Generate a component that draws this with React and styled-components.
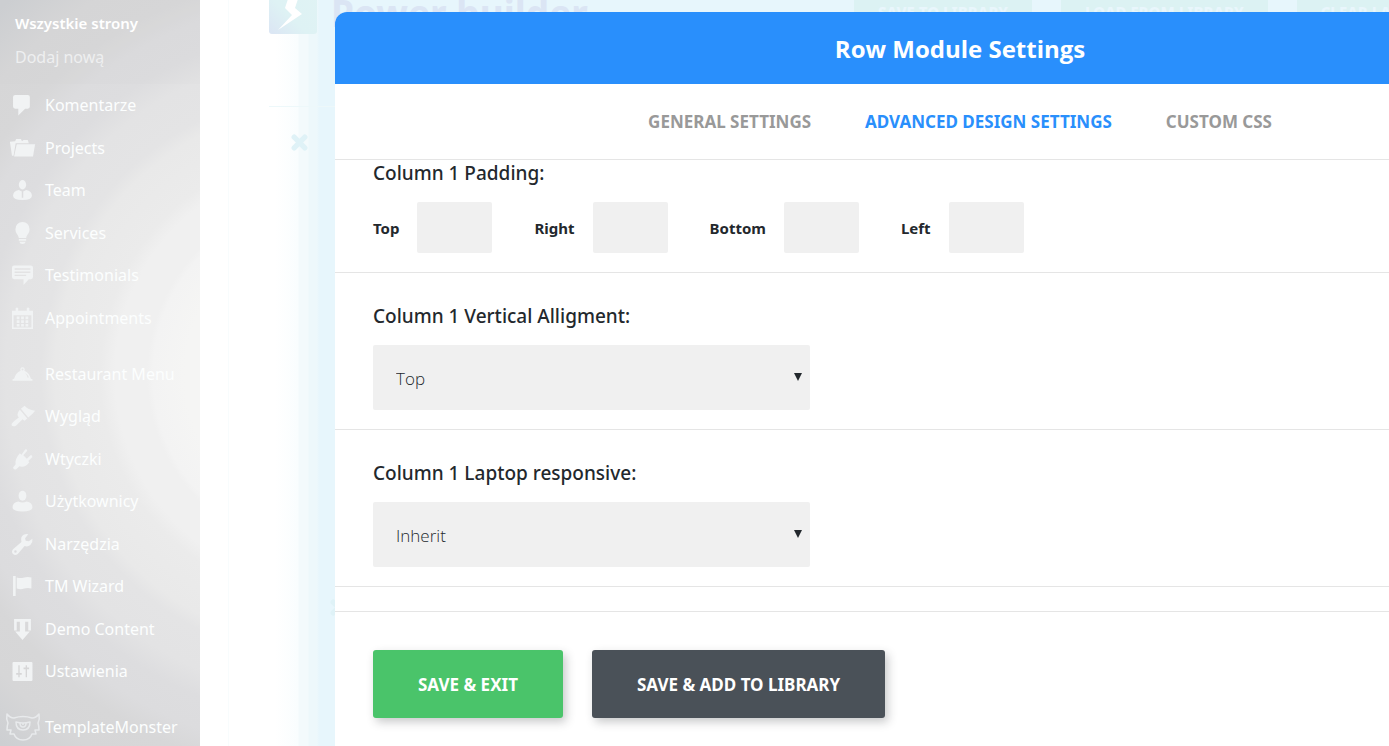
import { useState } from 'react';
import styled, { createGlobalStyle } from 'styled-components';

const menu = [
    { name: 'Komentarze', icon: 'comments' },
    { name: 'Projects', icon: 'folder' },
    { name: 'Team', icon: 'team' },
    { name: 'Services', icon: 'bulb' },
    { name: 'Testimonials', icon: 'quote' },
    { name: 'Appointments', icon: 'calendar' },
    null,
    { name: 'Restaurant Menu', icon: 'dish' },
    { name: 'Wygląd', icon: 'brush' },
    { name: 'Wtyczki', icon: 'plug' },
    { name: 'Użytkownicy', icon: 'user' },
    { name: 'Narzędzia', icon: 'wrench' },
    { name: 'TM Wizard', icon: 'flag' },
    { name: 'Demo Content', icon: 'download' },
    { name: 'Ustawienia', icon: 'sliders' },
    null,
    { name: 'TemplateMonster', icon: 'monster' },
]

// 20x20 glyphs
const icons = {
    comments: <path d="M3 0h12q2 0 2 2v9q0 2-2 2h-2.500L6 19.500V13H3q-2 0-2-2V2q0-2 2-2z" />,
    folder: (
        <>
            <path d="M-2 3.500 3 3l1-2h4.500l1 2 1.500-1h4l1 3H3.500L1.500 17H0z" />
            <path d="M4.500 6H22L20 17.500H2z" />
        </>
    ),
    team: (
        <>
            <ellipse cx="10" cy="4.500" rx="3.500" ry="4.500" />
            <path d="M6.500 9.500 9.300 11v6h1.400v-6l2.800-1.500q5.500 1 5.500 5.500 0 4-9 4t-9-4q0-4.500 5.500-5.500z" />
        </>
    ),
    bulb: (
        <>
            <path d="M10-1a6.700 6.700 0 0 1 6.700 7c0 4-2.700 5-3.200 8.300h-7C6 11 3.300 10 3.300 6A6.700 6.700 0 0 1 10-1z" />
            <path d="M6.500 15.300h7v1.500h-7zM7 17.800h6q-.5 2.200-3 2.200t-3-2.200z" />
        </>
    ),
    quote: (
        <path fillRule="evenodd" d="M2 .5h16q2 0 2 2v9q0 2-2 2h-2L11 19v-5.500H2q-2 0-2-2v-9q0-2 2-2zM2.500 3.200v1.300h15V3.200zM2.500 6.200v1.300h15V6.200zM2.500 9.200v1.300h11V9.200z" />
    ),
    calendar: (
        <path fillRule="evenodd" d="M0 2.500h3.500V0q1.200-1 2.400 0v2.500h8.200V0q1.200-1 2.400 0v2.500H20V20H0zM1.500 7v11.500h17V7zM4.500 8.200h2.600v2.500H4.500zm4.200 0h2.600v2.500H8.700zm4.200 0h2.600v2.500h-2.600zM4.500 11.700h2.600v2.500H4.500zm4.200 0h2.600v2.500H8.700zm4.200 0h2.600v2.500h-2.600zM4.500 15.200h2.600v2.300H4.500zm4.200 0h2.600v2.300H8.700zm4.200 0h2.600v2.300h-2.600z" />
    ),
    dish: <path fillRule="evenodd" d="M10 3a2.200 2.200 0 0 1 1.800 3.400Q16.500 8.500 18 14l1.500.5V16H.5v-1.500L2 14Q3.500 8.500 8.200 6.400A2.200 2.200 0 0 1 10 3zm0 1.200a.9.900 0 1 0 .1 0zm2.500 4.300q1.800 1.500 2.500 4.500l1-.3Q15 9.500 12.500 8.500z" />,
    brush: (
        <>
            <path d="M8.500 2.500 12-.2Q15 3.500 22 4.500q-2.500 3.500-6.500 6.500z" />
            <path d="M7.500 3.500 14.500 12l-2.500 2-2-1.500-6 6Q1 20.500-.5 18-.7 16 6.500 11L5.500 9.500Q4.500 7 7.500 3.500z" />
        </>
    ),
    plug: (
        <path d="M12.500.5q1.800-.6 2 1.200L10.800 6l3.300 3.200L18 5.700q1.800.3 1.200 2.200L15.500 11.500l1 1Q12.500 18 7 16.500l-3 2.700q-2.500 1-3-1.500L3.500 14.500Q2.500 9.500 7.500 4L9 5.500z" />
    ),
    user: (
        <>
            <ellipse cx="10" cy="4.500" rx="3.700" ry="4.700" />
            <path d="M6 10q4 2 8 0 5.500 1 5.500 5.500 0 4-9.500 4t-9.500-4Q.5 11 6 10z" />
        </>
    ),
    wrench: (
        <path fillRule="evenodd" d="M19.500 4.500 16 7l-3-.5L12.500 4 15.500.2Q11-.5 9 3q-.8 2 0 4.500L1 14.500q-2 2.500 0 4.500t4.500 0L12 11.500q3 1 5.500-1 2.500-2.500 2-6zM3.300 15.500a1.200 1.200 0 1 1 0 2.400 1.200 1.200 0 0 1 0-2.400z" />
    ),
    flag: <path d="M1 0h2.500v19H1zM4.500 1.500q4 1 7 0 3.500-1 7 0V12q-3.500-1-7 0-3 1-7 0z" />,
    download: <path d="M2 0h16v11h-2.500V2.500h-3V12H17l-7 8-7-8h4.500V2.500h-3V11H2z" />,
    sliders: (
        <path fillRule="evenodd" d="M1.500 1h17q1 0 1 1v16q0 1-1 1h-17q-1 0-1-1V2q0-1 1-1zM6 4v7.500H4V13h2v2.500h1.300V13h2v-1.500h-2V4zm7 0v2.300h-2v1.500h2v7.700h1.300V7.800h2V6.300h-2V4z" />
    ),
}

const Icon = ({ name }) => {
    if (name === 'monster') {
        return (
            <MonsterSvg viewBox="0 0 34 28" aria-hidden="true">
                <path d="M1 1q3 4 7 4 9-3 18 0 4 0 7-4 1 5-1 9 1 3 1 7h-4l1 4h-4q-2 6-9 6t-9-6H4l1-4H1q0-4 1-7Q0 6 1 1z" />
                <path d="M10 9q7 2 14 0 0 8-7 8t-7-8z" />
                <path d="M14 10q0 4 3 4t3-4M17 10v2" />
            </MonsterSvg>
        )
    }
    return (
        <MenuSvg viewBox="0 0 20 20" aria-hidden="true">{icons[name]}</MenuSvg>
    )
}

const tabs = ['General settings', 'Advanced design settings', 'Custom CSS']

const sides = ['Top', 'Right', 'Bottom', 'Left']

function SelectField({ id, label, options }) {
    return (
        <Section>
            <FieldTitle as="label" htmlFor={id}>{label}</FieldTitle>
            <SelectBox>
                <Select id={id}>
                    {options.map(option => <option key={option}>{option}</option>)}
                </Select>
                <Arrow viewBox="0 0 8 8" aria-hidden="true">
                    <path d="M0 0h8L4 8z" />
                </Arrow>
            </SelectBox>
        </Section>
    )
}

function App() {
    const [active, setActive] = useState(tabs[1])

    return (
        <>
            <GlobalStyle />
            <Page>
                <Sidebar>
                    <Submenu>
                        <SubLink href="#" $current>Wszystkie strony</SubLink>
                        <SubLink href="#">Dodaj nową</SubLink>
                    </Submenu>
                    <Menu>
                        {menu.map((item, i) => item ? (
                            <li key={item.name}>
                                <MenuLink href="#">
                                    <IconSlot><Icon name={item.icon} /></IconSlot>
                                    {item.name}
                                </MenuLink>
                            </li>
                        ) : <Separator key={i} />)}
                    </Menu>
                </Sidebar>

                <Builder>
                    <BuilderPanel>
                        <BuilderHead>
                            <Logo viewBox="0 0 48 48" aria-hidden="true">
                                <defs>
                                    <linearGradient id="logo" x1="0" y1="1" x2="1" y2="0">
                                        <stop offset="0" stopColor="#dbe5f4" />
                                        <stop offset="0.4" stopColor="#def2f4" />
                                        <stop offset="1" stopColor="#e0f3f4" />
                                    </linearGradient>
                                </defs>
                                <rect width="48" height="48" rx="3" fill="url(#logo)" />
                                <path d="M22 4 16 22l7 7-14 15 24-16-7-6 6-18z" fill="#fff" />
                            </Logo>
                            <BuilderTitle>Power builder</BuilderTitle>
                            <BuilderActions>
                                <GhostButton type="button">Save to library</GhostButton>
                                <GhostButton type="button">Load from library</GhostButton>
                                <GhostButton type="button">Clear layout</GhostButton>
                            </BuilderActions>
                        </BuilderHead>
                        <BuilderRow>
                            <Cross viewBox="0 0 16 16" aria-hidden="true">
                                <path d="M3 3l10 10M13 3 3 13" />
                            </Cross>
                            <Cross viewBox="0 0 16 16" aria-hidden="true" $inner>
                                <path d="M3 3l10 10M13 3 3 13" />
                            </Cross>
                        </BuilderRow>
                    </BuilderPanel>
                </Builder>

                <Modal role="dialog" aria-labelledby="modal-title">
                    <ModalHeader>
                        <ModalTitle id="modal-title">Row Module Settings</ModalTitle>
                    </ModalHeader>
                    <Tabs>
                        {tabs.map(tab => (
                            <Tab key={tab} type="button" $active={tab === active} onClick={() => setActive(tab)}>
                                {tab}
                            </Tab>
                        ))}
                    </Tabs>
                    <ModalBody>
                        <Section $scrolled>
                            <FieldTitle>Column 1 Padding:</FieldTitle>
                            <Sides>
                                {sides.map(side => (
                                    <SideLabel key={side}>
                                        {side}
                                        <SideInput type="text" />
                                    </SideLabel>
                                ))}
                            </Sides>
                        </Section>
                        <SelectField id="valign" label="Column 1 Vertical Alligment:" options={['Top', 'Center', 'Bottom']} />
                        <SelectField id="laptop" label="Column 1 Laptop responsive:" options={['Inherit', '1/2', '1/3']} />
                    </ModalBody>
                    <ModalFooter>
                        <Button type="button" $color="#4ac46a">Save &amp; Exit</Button>
                        <Button type="button" $color="#4a5158">Save &amp; Add to library</Button>
                    </ModalFooter>
                </Modal>
            </Page>
        </>
    )
}

export default App

const GlobalStyle = createGlobalStyle`
    * {
        box-sizing: border-box;
    }

    body {
        margin: 0;
        font-family: "Noto Sans", "Open Sans", sans-serif;
        color: #23282d;
        background: #fff;
    }

    button, input, select {
        font-family: inherit;
    }
`

const Page = styled.div`
    position: relative;
    display: flex;
    height: 100vh;
    overflow: hidden;
`

const Sidebar = styled.nav`
    flex: 0 0 200px;
    background: radial-gradient(circle at 325px 375px, #f5f5f4 140px, #f3f3f3 172px, #f0f0f0 178px, #f0f0f0 210px, #ebebeb 225px, #e9e9e9 270px, #e4e4e5 284px, #e3e3e4 320px, #dddddf 345px, #dcdcde 375px, #d7d7d8 400px, #d6d6d7 440px, #cdcfd2 490px);
`

const Submenu = styled.div`
    display: flex;
    flex-direction: column;
    padding: 6px 15px 10px;
    background: rgba(200, 200, 200, 0.08);
`

const SubLink = styled.a`
    font-size: ${({ $current }) => $current ? '15px' : '16px'};
    line-height: 34px;
    font-weight: ${({ $current }) => $current ? 600 : 400};
    color: ${({ $current }) => $current ? '#fff' : '#eeeff0'};
    text-decoration: none;
`

const Menu = styled.ul`
    list-style: none;
    margin: 0;
    padding: 0;

    li:nth-child(even) {
        margin-top: 1px;
    }
`

const Separator = styled.li`
    height: 13px;
`

const MenuLink = styled.a`
    display: flex;
    align-items: center;
    height: 42px;
    font-size: 16px;
    white-space: nowrap;
    color: #fcfefe;
    text-decoration: none;
`

const IconSlot = styled.span`
    flex: 0 0 45px;
    display: flex;
    justify-content: center;
`

const MenuSvg = styled.svg`
    width: 21px;
    height: 21px;
    fill: #f1f3f4;
    overflow: visible;
`

const MonsterSvg = styled.svg`
    width: 34px;
    height: 28px;
    fill: none;
    stroke: #e8eaec;
    stroke-width: 1.5;
    stroke-linejoin: round;
    overflow: visible;
`

const Builder = styled.main`
    flex: 1;
    min-width: 0;
    padding-left: 28px;
    background: linear-gradient(to right, #fff 75px, #f9fdfe 98px, #f3fafc 99px, #f3fafc 108px, #edf8fb 109px, #edf8fb 117px, #e7f6fc 119px);
`

const BuilderPanel = styled.div`
    display: flex;
    flex-direction: column;
    height: 100%;
    padding-left: 40px;
    border-left: 1px solid #f8fcfd;
`

const BuilderHead = styled.header`
    display: flex;
    gap: 14px;
    height: 106px;
`

const Logo = styled.svg`
    flex: none;
    width: 48px;
    height: 48px;
    margin-top: -14px;
`

const BuilderTitle = styled.h1`
    flex: none;
    width: 494px;
    margin: -14px 0 0;
    font-size: 37px;
    line-height: 54px;
    font-weight: 700;
    white-space: nowrap;
    color: #dbe5f4;
`

const BuilderActions = styled.div`
    display: flex;
    align-items: flex-start;
    gap: 29px;
    margin-left: 15px;
`

const GhostButton = styled.button`
    height: 24px;
    padding: 0 24px;
    border: 0;
    font-size: 15px;
    font-weight: 800;
    text-transform: uppercase;
    white-space: nowrap;
    color: #e9f6fc;
    background: #dcf2f3;
`

const BuilderRow = styled.div`
    flex: 1;
    display: flex;
    flex-direction: column;
    justify-content: space-between;
    padding: 27px 22px 130px;
    border-top: 1px solid #edf8fa;
`

const Cross = styled.svg`
    display: block;
    width: 17px;
    height: 17px;
    margin-left: ${({ $inner }) => $inner ? '39px' : '0'};
    fill: none;
    stroke: #dff2f7;
    stroke-width: 5;
    stroke-linecap: round;
`

// dialog lies over the builder
const Modal = styled.div`
    position: absolute;
    top: 12px;
    left: 335px;
    width: 90vw;
    min-height: 100%;
    display: flex;
    flex-direction: column;
    border-radius: 12px;
    background: #fff;
    overflow: hidden;
`

const ModalHeader = styled.header`
    display: flex;
    align-items: center;
    justify-content: center;
    height: 72px;
    background: #298ffc;
`

const ModalTitle = styled.h2`
    margin: 0;
    font-family: "Open Sans", sans-serif;
    font-size: 24px;
    font-weight: 700;
    color: #fff;
`

const Tabs = styled.div`
    display: flex;
    align-items: center;
    justify-content: center;
    gap: 54px;
    height: 76px;
    border-bottom: 1px solid #e5e5e5;
`

const Tab = styled.button`
    padding: 0;
    border: 0;
    background: none;
    font-size: 17px;
    font-weight: 700;
    text-transform: uppercase;
    color: ${({ $active }) => $active ? '#298ffc' : '#999'};
    cursor: pointer;
`

const ModalBody = styled.div`
    padding-bottom: 24px;
`

const Section = styled.section`
    padding: ${({ $scrolled }) => $scrolled ? '1px' : '31px'} 38px 19px;
    border-bottom: 1px solid #e5e5e5;
`

const FieldTitle = styled.h3`
    display: block;
    margin: 0 0 17px;
    font-size: 19px;
    line-height: 24px;
    font-weight: 500;
`

const Sides = styled.div`
    display: flex;
    gap: 42px;
`

const SideLabel = styled.label`
    display: flex;
    align-items: center;
    gap: 18px;
    font-size: 15px;
    font-weight: 700;
`

const SideInput = styled.input`
    width: 75px;
    height: 51px;
    padding: 0 12px;
    border: 0;
    border-radius: 2px;
    background: #f0f0f0;
    font-size: 15px;
`

const SelectBox = styled.div`
    position: relative;
    max-width: 437px;
`

const Select = styled.select`
    appearance: none;
    display: block;
    width: 100%;
    height: 65px;
    padding: 1px 23px 0;
    border: 0;
    border-radius: 2px;
    background: #f0f0f0;
    color: #23282d;
    font-family: "Open Sans", sans-serif;
    font-size: 17px;
    font-weight: 300;
`

const Arrow = styled.svg`
    position: absolute;
    top: 28px;
    right: 8px;
    width: 8px;
    height: 8px;
    fill: #23282d;
    pointer-events: none;
`

const ModalFooter = styled.footer`
    display: flex;
    gap: 29px;
    padding: 38px;
    border-top: 1px solid #e5e5e5;
`

const Button = styled.button`
    height: 68px;
    padding: 1px 45px 0;
    border: 0;
    border-radius: 3px;
    background: ${({ $color }) => $color};
    box-shadow: 3px 4px 10px rgba(35, 40, 45, 0.25);
    font-size: 17px;
    font-weight: 700;
    text-transform: uppercase;
    white-space: nowrap;
    color: #fff;
    cursor: pointer;
`
